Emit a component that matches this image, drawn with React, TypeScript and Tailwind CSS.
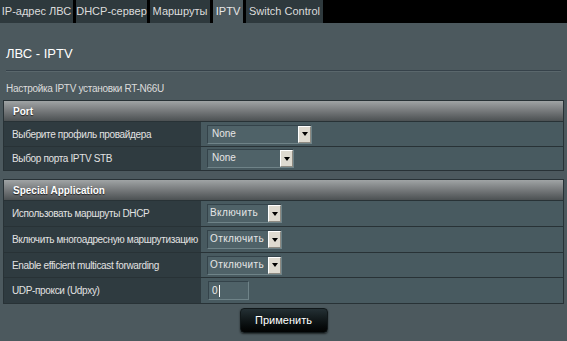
import React from 'react';

const tabs = [
  { label: 'IP-адрес ЛВС', w: 'w-[73px]' },
  { label: 'DHCP-сервер', w: 'w-[71px]' },
  { label: 'Маршруты', w: 'w-[60px]' },
  { label: 'IPTV', w: 'w-[30px]', active: true },
  { label: 'Switch Control', w: 'w-[77px]' },
];

function Select({ value, w, wide }: { value: string; w: string; wide?: boolean }) {
  return (
    <div
      className={`${w} h-[19px] flex items-stretch bg-[#4f6268] border border-t-[#34434a] border-l-[#34434a] border-b-[#6f8388] border-r-[#6f8388]`}
    >
      <div
        className={`flex-1 text-[10px] leading-[15px] text-[#e6e6e6] whitespace-nowrap ${
          wide ? 'pl-[2px] tracking-[0.4px]' : 'pl-[4px]'
        }`}
      >
        {value}
      </div>
      <div className="w-[13px] shrink-0 bg-[#dedad0] border border-t-white border-l-white border-b-[#8d8a82] border-r-[#8d8a82] flex items-center justify-center">
        <svg width="6" height="4" viewBox="0 0 6 4">
          <path d="M0 0H6L3 4Z" fill="#000" />
        </svg>
      </div>
    </div>
  );
}

function Row({ label, children, h }: { label: string; children: React.ReactNode; h: string }) {
  return (
    <div className={`flex ${h} border-t border-[#283236]`}>
      <div className="w-[197px] shrink-0 bg-[#2f3b40] pl-[8px] flex items-center text-[10px] tracking-[-0.35px] whitespace-nowrap text-[#e2e2e2]">
        {label}
      </div>
      <div className="flex-1 bg-[#485a60] pl-[6px] flex items-center">{children}</div>
    </div>
  );
}

function Header({ title }: { title: string }) {
  return (
    <div className="h-[20px] bg-gradient-to-b from-[#a0a4a5] via-[#76797b] to-[#4c5153] pl-[9px] flex items-center text-[10px] font-bold text-white [text-shadow:0_1px_1px_#222]">
      {title}
    </div>
  );
}

export default function App() {
  return (
    <div className="w-[567px] h-[341px] overflow-hidden bg-[#4c595e] font-['Liberation_Sans',Arial,sans-serif]">
      <div className="h-[23px] bg-black flex">
        {tabs.map((t) => (
          <div
            key={t.label}
            className={`${t.w} h-full flex items-center justify-center text-[11px] mr-[3px] ${
              t.active ? 'bg-[#4c595e] text-[#e8e8e8]' : 'bg-[#2e393d] text-[#dcdcdc]'
            }`}
          >
            {t.label}
          </div>
        ))}
      </div>

      <div className="px-[6px]">
        <h1 className="mt-[23px] text-[13px] leading-[16px] text-white">ЛВС - IPTV</h1>
        <div className="mt-[8px] h-[2px] border-t border-[#36424a] border-b border-b-[#5a676c]" />
        <p className="mt-[10px] text-[10px] tracking-[-0.3px] leading-[14px] text-[#dcdcdc]">
          Настройка IPTV установки RT-N66U
        </p>
      </div>

      <div className="mx-[3px] mt-[4px] border border-[#283236]">
        <Header title="Port" />
        <Row label="Выберите профиль провайдера" h="h-[25px]">
          <Select value="None" w="w-[105px]" />
        </Row>
        <Row label="Выбор порта IPTV STB" h="h-[24px]">
          <Select value="None" w="w-[87px]" />
        </Row>
      </div>

      <div className="mx-[3px] mt-[8px] border border-[#283236]">
        <Header title="Special Application" />
        <Row label="Использовать маршруты DHCP" h="h-[26px]">
          <Select value="Включить" w="w-[75px]" wide />
        </Row>
        <Row label="Включить многоадресную маршрутизацию" h="h-[26px]">
          <Select value="Отключить" w="w-[75px]" wide />
        </Row>
        <Row label="Enable efficient multicast forwarding" h="h-[25px]">
          <Select value="Отключить" w="w-[75px]" wide />
        </Row>
        <Row label="UDP-прокси (Udpxy)" h="h-[26px]">
          <div className="ml-[1px] w-[41px] h-[19px] bg-[#4f6268] border border-t-[#34434a] border-l-[#34434a] border-b-[#6f8388] border-r-[#6f8388] pl-[3px] flex items-center text-[10px] text-[#ececec]">
            0<span className="ml-[1px] w-px h-[12px] bg-white" />
          </div>
        </Row>
      </div>

      <div className="flex justify-center mt-[4px]">
        <button className="w-[88px] h-[25px] rounded-[4px] bg-gradient-to-b from-[#243034] to-[#020303] border border-[#11181a] shadow-[0_1px_2px_rgba(0,0,0,0.6)] text-[11px] text-white">
          Применить
        </button>
      </div>
    </div>
  );
}
